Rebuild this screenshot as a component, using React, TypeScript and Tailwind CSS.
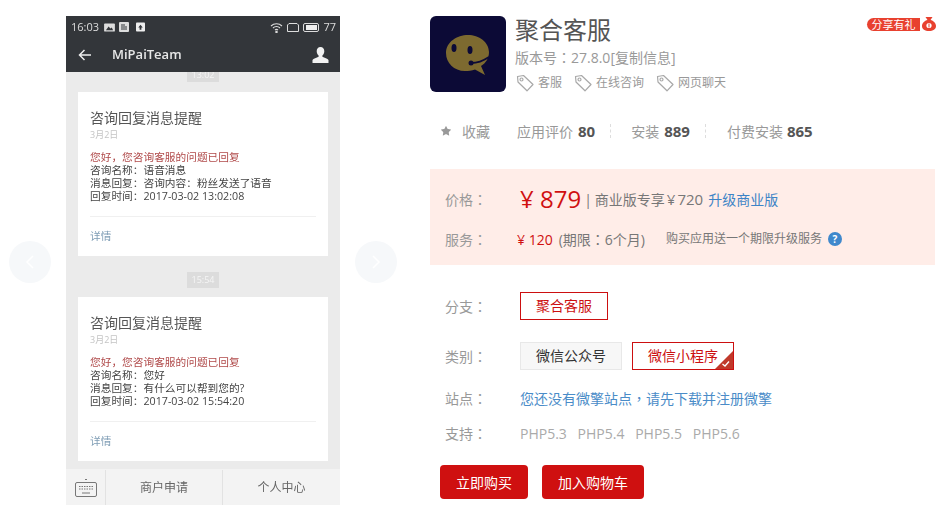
import type { ReactNode } from "react";
import { Star } from "lucide-react";

const FONT = "font-['Open_Sans','Noto_Sans_CJK_SC',sans-serif]";

// full-width punctuation sits centered in the original font
function Punct({ char }: { char: string }) {
  return <span className="font-['Noto_Sans_CJK_TC']">{char}</span>;
}

function TagIcon() {
  return (
    <svg width="18" height="18" viewBox="0 0 18 18" fill="none" stroke="#a8a8a8" strokeWidth="1.2">
      <path d="M1.500 2.500 L7.500 1.500 L17 10.500 L11 16.800 L2 8 Z" strokeLinejoin="round" />
      <circle cx="5.500" cy="5.500" r="1.500" />
    </svg>
  );
}

function Tag({ label }: { label: string }) {
  return (
    <span className="flex items-center gap-1 text-[12px] text-[#999]">
      <TagIcon />
      {label}
    </span>
  );
}

function StatusBar() {
  return (
    <div className="h-[22px] flex items-center justify-between pl-[5px] pr-[4px] text-[11px] text-[#ddd]">
      <div className="flex items-center">
        <span>16:03</span>
        <svg width="11" height="9" viewBox="0 0 12 10" className="ml-[5px]"><rect width="12" height="9" y="0.5" rx="1" fill="#ddd" /><path d="M2 8 L5 4 L7 6 L8.500 5 L10 8 Z" fill="#33363a" /></svg>
        <svg width="10" height="10" viewBox="0 0 10 10" className="ml-[4px]"><rect width="10" height="10" rx="1" fill="#ddd" /><path d="M2 3h4M2 5h6M2 7h6" stroke="#33363a" /></svg>
        <svg width="9" height="10" viewBox="0 0 10 10" className="ml-[7px]"><rect width="10" height="10" rx="1" fill="#eee" /><path d="M5 2.500 L7.500 5.500 H6 V8 H4 V5.500 H2.500 Z" fill="#33363a" /></svg>
      </div>
      <div className="flex items-center gap-[4px]">
        <svg width="13" height="11" viewBox="0 0 13 11" fill="none" stroke="#ddd" strokeWidth="1.1"><path d="M1 4a8 8 0 0 1 11 0M3 6a5 5 0 0 1 7 0M5 8a2.400 2.400 0 0 1 3 0" /><circle cx="6.500" cy="10" r="0.7" fill="#ddd" /></svg>
        <svg width="12" height="9" viewBox="0 0 12 9" fill="none" stroke="#ddd" strokeWidth="1"><path d="M2 .5h8l1.500 1.500v6.500h-11V2z" /></svg>
        <div className="w-[16px] h-[9px] border border-[#ddd] rounded-[2px] flex justify-end p-[1px]">
          <div className="w-[11px] bg-[#eee]" />
        </div>
        <span>77</span>
      </div>
    </div>
  );
}

function NoticeCard({ lines, className }: { lines: string[]; className: string }) {
  return (
    <div className={`mx-[12px] bg-white h-[164px] px-[12px] flex flex-col ${className}`}>
      <div className="text-[14px] leading-[18px] text-[#555] mt-[17px]">咨询回复消息提醒</div>
      <div className="text-[9px] leading-[10px] text-[#c4c4c4] mt-[3px]">3月2日</div>
      <div className="text-[10.7px] leading-[13px] mt-[11px] text-[#444]">
        <div className="text-[#b04a4a]">您好，您咨询客服的问题已回复</div>
        {lines.map((line) => (
          <div key={line}>{line}</div>
        ))}
      </div>
      <div className="h-px bg-[#f0f0f0] mt-[13px]" />
      <div className="text-[10.7px] leading-[14px] text-[#7f9db5] mt-[12px]">详情</div>
    </div>
  );
}

function Phone() {
  return (
    <div className="w-[274px] h-[489px] bg-[#ebebeb] flex flex-col overflow-hidden blur-[0.4px]">
      <div className="h-[56px] bg-[#33363a] shrink-0">
        <StatusBar />
        <div className="h-[34px] flex items-center justify-between pl-[12px] pr-[11px]">
          <div className="flex items-center gap-[21px]">
            <svg width="13" height="12" viewBox="0 0 13 12" fill="none" stroke="#eee" strokeWidth="1.5"><path d="M13 6H1.500M6.500 1 1.500 6l5 5" /></svg>
            <span className="text-[13px] font-semibold text-[#e8e8e8]">MiPaiTeam</span>
          </div>
          <svg width="17" height="16" viewBox="0 0 17 16" fill="#f2f2f2"><path d="M8.500 0c2.400 0 3.800 1.800 3.800 4.200 0 1.900-.9 3.500-1.900 4.400v1.200c2 .8 5.300 1.800 6.100 3.200V16H.5v-3c.8-1.400 4.100-2.400 6.100-3.200V8.600C5.600 7.700 4.700 6.100 4.700 4.200 4.700 1.800 6.100 0 8.500 0z" /></svg>
        </div>
      </div>
      <div className="flex justify-center shrink-0">
        <span className="w-[32px] h-[10px] bg-[#dcdcdc] text-[#f5f5f5] text-[9px] leading-[6px] text-center overflow-hidden">13:02</span>
      </div>
      <NoticeCard className="mt-[10px] shrink-0" lines={["咨询名称：语音消息", "消息回复：咨询内容：粉丝发送了语音", "回复时间：2017-03-02 13:02:08"]} />
      <div className="flex justify-center shrink-0 mt-[16px]">
        <span className="w-[32px] h-[16px] bg-[#dcdcdc] text-[#f5f5f5] text-[9px] leading-[16px] text-center">15:54</span>
      </div>
      <NoticeCard className="mt-[9px] shrink-0" lines={["咨询名称：您好", "消息回复：有什么可以帮到您的?", "回复时间：2017-03-02 15:54:20"]} />
      <div className="mt-[8px] flex-1 bg-[#f3f3f3] flex text-[12px] text-[#666] pt-[1px]">
        <div className="w-[40px] flex items-center justify-center border-r border-[#e2e2e2]">
          <svg width="22" height="22" viewBox="0 0 22 22" fill="none" stroke="#777"><rect x=".5" y="5.500" width="21" height="14" rx="1.500" /><path d="M4 9.500h14M4 12h14" strokeDasharray="1.500 1" /><path d="M7 16h8" /><path d="M10 2.500h2" /></svg>
        </div>
        <div className="w-[117px] flex items-center justify-center border-r border-[#e2e2e2]">商户申请</div>
        <div className="flex-1 flex items-center justify-center">个人中心</div>
      </div>
    </div>
  );
}

function Row({ label, className, children }: { label: string; className: string; children: ReactNode }) {
  return (
    <div className={`flex items-center pl-[15px] ${className}`}>
      <span className="w-[75px] shrink-0 text-[14px] text-[#999]">
        {label}
        <Punct char="：" />
      </span>
      {children}
    </div>
  );
}

export default function App() {
  return (
    <div className={`relative w-[950px] h-[520px] bg-white overflow-hidden flex ${FONT}`}>
      <div className="w-[430px] shrink-0 pt-[16px] pl-[66px]">
        <Phone />
      </div>

      <div className="absolute left-[9px] top-[241px] w-[42px] h-[42px] rounded-full bg-[#f6f8fa] flex items-center justify-center">
        <svg width="10" height="16" viewBox="0 0 10 16" fill="none" stroke="#fff" strokeWidth="1.500"><path d="M8 2 2 8l6 6" /></svg>
      </div>
      <div className="absolute left-[355px] top-[241px] w-[42px] h-[42px] rounded-full bg-[#f6f8fa] flex items-center justify-center">
        <svg width="10" height="16" viewBox="0 0 10 16" fill="none" stroke="#fff" strokeWidth="1.500"><path d="m2 2 6 6-6 6" /></svg>
      </div>

      <div className="w-[505px] shrink-0 pt-[16px] relative">
        <div className="absolute right-[-1px] top-[17px] flex items-center gap-[2px]">
          <span className="h-[13px] w-[53px] rounded-l-full bg-[#e8412f] text-white text-[11px] leading-[13px] text-center">分享有礼</span>
          <svg width="14" height="14" viewBox="0 0 14 14"><path d="M3.500 0h7L8.500 3c3 .8 5.500 3 5.500 6 0 3.500-3 5-7 5s-7-1.500-7-5c0-3 2.500-5.200 5.500-6z" fill="#e8412f" /><circle cx="7" cy="8.500" r="2.600" fill="#fff" /><path d="M7 6.500v4" stroke="#e8412f" /></svg>
        </div>

        <div className="flex">
          <div className="w-[76px] h-[76px] rounded-[6px] bg-[#0c0a36] flex items-center justify-center shrink-0">
            <svg width="44" height="44" viewBox="0 0 44 44">
              <path d="M22 3C11 3 0 10 0 21c0 10 8 18 19 18 3 0 7-.5 10-1.500L39 43l-4-9c5-3 8-8 8-14C43 10 33 3 22 3z" fill="#7d6a30" />
              <ellipse cx="8" cy="16" rx="2.500" ry="4" fill="#0c0a36" />
              <ellipse cx="24" cy="18" rx="2.500" ry="4" fill="#0c0a36" />
              <path d="M25 31c6 0 12-2 18-6" stroke="#0c0a36" strokeWidth="2" fill="none" />
              <circle cx="25" cy="31" r="2.500" fill="#0c0a36" />
            </svg>
          </div>
          <div className="ml-[9px] flex flex-col">
            <div className="text-[24px] leading-[28px] text-[#555]">聚合客服</div>
            <div className="text-[14px] leading-[20px] text-[#999] mt-[3px]">版本号<Punct char="：" />27.8.0[复制信息]</div>
            <div className="flex gap-[12px] mt-[6px] ml-[1px]">
              <Tag label="客服" />
              <Tag label="在线咨询" />
              <Tag label="网页聊天" />
            </div>
          </div>
        </div>

        <div className="flex items-center mt-[28px] h-[22px] pl-[10px] text-[14px] text-[#999]">
          <Star size={12} fill="#999" strokeWidth={0} className="mr-[10px]" />
          <span className="mr-[27px]">收藏</span>
          <span>应用评价</span>
          <b className="ml-[5px] text-[15px] text-[#555]">80</b>
          <span className="ml-[15px] mr-[20px] h-[14px] border-l border-dashed border-[#ddd]" />
          <span>安装</span>
          <b className="ml-[5px] text-[15px] text-[#555]">889</b>
          <span className="ml-[15px] mr-[21px] h-[14px] border-l border-dashed border-[#ddd]" />
          <span>付费安装</span>
          <b className="ml-[4px] text-[15px] text-[#555]">865</b>
        </div>

        <div className="mt-[27px] h-[96px] bg-[#ffede8] flex flex-col">
          <Row label="价格" className="h-[28px] mt-[16px]">
            <span className="text-[24px] leading-[28px] text-[#d01010]">¥ 879</span>
            <span className="text-[14px] text-[#777] ml-[3px]">|</span>
            <span className="text-[14px] text-[#777] ml-[3px]">商业版专享</span>
            <span className="text-[15px] text-[#777] ml-[2px]">¥</span>
            <span className="text-[15px] text-[#777] ml-[2px]">720</span>
            <span className="text-[14px] text-[#3d84c6] ml-[5px]">升级商业版</span>
          </Row>
          <Row label="服务" className="h-[20px] mt-[16px]">
            <span className="text-[14px] text-[#d01010] -ml-[3px]">¥ 120</span>
            <span className="text-[14px] text-[#777] ml-[6px]">(期限<Punct char="：" />6个月)</span>
            <span className="text-[12px] text-[#777] ml-[21px]">购买应用送一个期限升级服务</span>
            <span className="ml-[6px] w-[14px] h-[14px] rounded-full bg-[#3f88cc] text-white text-[10px] leading-[14px] text-center font-bold">?</span>
          </Row>
        </div>

        <Row label="分支" className="mt-[27px] h-[28px]">
          <span className="w-[88px] h-[28px] border border-[#cc0f10] text-[14px] leading-[26px] text-center text-[#cc0f10]">聚合客服</span>
        </Row>
        <Row label="类别" className="mt-[22px] h-[28px]">
          <span className="w-[102px] h-[28px] border border-[#e8e8e8] bg-[#f7f7f7] text-[14px] leading-[26px] text-center text-[#333]">微信公众号</span>
          <span className="relative ml-[10px] w-[102px] h-[28px] border border-[#cc0f10] text-[14px] leading-[26px] text-center text-[#cc0f10] overflow-hidden">
            微信小程序
            <svg width="18" height="18" viewBox="0 0 18 18" className="absolute right-0 bottom-0">
              <path d="M18 0v18H0z" fill="#c0392b" />
              <path d="M7.500 13l2.500 2 4-4.500" stroke="#fff" strokeWidth="1.300" fill="none" />
            </svg>
          </span>
        </Row>
        <Row label="站点" className="mt-[18px] h-[20px]">
          <span className="text-[14px] text-[#4a8cc8]">您还没有微擎站点<Punct char="，" />请先下载并注册微擎</span>
        </Row>
        <Row label="支持" className="mt-[15px] h-[20px]">
          <div className="flex text-[14px] text-[#aaa]">
            <span className="w-[57.6px]">PHP5.3</span>
            <span className="w-[57.6px]">PHP5.4</span>
            <span className="w-[57.6px]">PHP5.5</span>
            <span className="w-[57.6px]">PHP5.6</span>
          </div>
        </Row>

        <div className="flex gap-[14px] mt-[22px] ml-[10px]">
          <button className="w-[88px] h-[34px] rounded-[4px] bg-[#cf1010] text-white text-[14px]">立即购买</button>
          <button className="w-[102px] h-[34px] rounded-[4px] bg-[#cf1010] text-white text-[14px]">加入购物车</button>
        </div>
      </div>
    </div>
  );
}
